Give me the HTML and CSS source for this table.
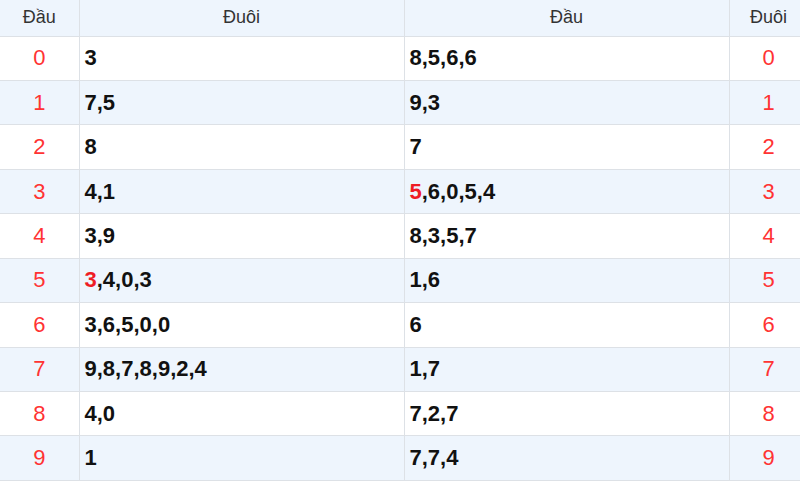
FILE: index.html
```html
<!DOCTYPE html>
<html lang="vi">
<head>
<meta charset="utf-8">
<title>Đầu Đuôi</title>
<link rel="stylesheet" href="styles.css">
</head>
<body>
<table class="loto">
  <colgroup>
    <col class="c-key"><col class="c-val"><col class="c-val"><col class="c-key">
  </colgroup>
  <thead>
    <tr><th>Đầu</th><th>Đuôi</th><th>Đầu</th><th>Đuôi</th></tr>
  </thead>
  <tbody>
    <tr><td class="key">0</td><td class="val">3</td><td class="val">8,5,6,6</td><td class="key">0</td></tr>
    <tr><td class="key">1</td><td class="val">7,5</td><td class="val">9,3</td><td class="key">1</td></tr>
    <tr><td class="key">2</td><td class="val">8</td><td class="val">7</td><td class="key">2</td></tr>
    <tr><td class="key">3</td><td class="val">4,1</td><td class="val"><span class="hl">5</span>,6,0,5,4</td><td class="key">3</td></tr>
    <tr><td class="key">4</td><td class="val">3,9</td><td class="val">8,3,5,7</td><td class="key">4</td></tr>
    <tr><td class="key">5</td><td class="val"><span class="hl">3</span>,4,0,3</td><td class="val">1,6</td><td class="key">5</td></tr>
    <tr><td class="key">6</td><td class="val">3,6,5,0,0</td><td class="val">6</td><td class="key">6</td></tr>
    <tr><td class="key">7</td><td class="val">9,8,7,8,9,2,4</td><td class="val">1,7</td><td class="key">7</td></tr>
    <tr><td class="key">8</td><td class="val">4,0</td><td class="val">7,2,7</td><td class="key">8</td></tr>
    <tr><td class="key">9</td><td class="val">1</td><td class="val">7,7,4</td><td class="key">9</td></tr>
  </tbody>
</table>
</body>
</html>
```
FILE: styles.css
```css
html, body {
  margin: 0;
  padding: 0;
  background: #ffffff;
  overflow: hidden;
}

.loto {
  width: 808px;
  table-layout: fixed;
  border-collapse: collapse;
  font-family: "Liberation Sans", Arial, sans-serif;
}

.c-key { width: 79px; }
.c-val { width: 325px; }

.loto th,
.loto td {
  border: 1px solid #dde1e6;
  padding: 0;
  vertical-align: middle;
}

.loto tr:first-child th,
.loto tr:first-child td { border-top: 0; }
.loto th:first-child,
.loto td:first-child { border-left: 0; }

.loto thead tr { height: 36px; }
.loto thead th {
  background: #eef5fd;
  font-weight: normal;
  font-size: 18px;
  color: #333333;
  text-align: center;
}

.loto tbody tr { height: 44.45px; }
.loto tbody tr:nth-child(even) td { background: #eef5fd; }

.key {
  text-align: center;
  color: #ff3333;
  font-size: 22px;
}

.val {
  text-align: left;
  padding-left: 5px !important;
  font-weight: bold;
  font-size: 22px;
  color: #111111;
}

.hl { color: #ee1c25; }
```
